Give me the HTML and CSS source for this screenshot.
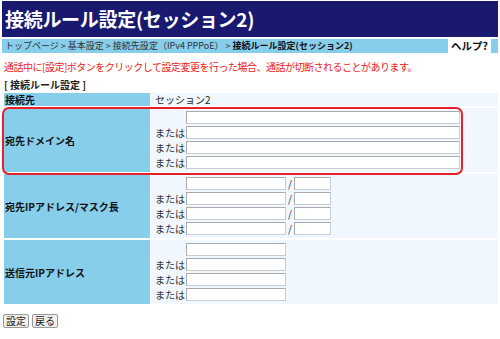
FILE: index.html
```html
<!DOCTYPE html>
<html lang="ja">
<head>
<meta charset="utf-8">
<title>接続ルール設定(セッション2)</title>
<link rel="stylesheet" href="styles.css">
</head>
<body>
<div class="title">接続ルール設定(セッション2)</div>
<div class="crumbs">
  <div class="path">トップページ &gt; 基本設定 &gt; 接続先設定（IPv4 PPPoE） &gt; <b>接続ルール設定(セッション2)</b></div>
  <div class="help">ヘルプ?</div>
</div>
<p class="notice">通話中に[設定]ボタンをクリックして設定変更を行った場合、通話が切断されることがあります。</p>
<p class="section">[ 接続ルール設定 ]</p>
<div class="form-wrap">
  <div class="form">
    <div class="label short">接続先</div>
    <div class="value short">セッション2</div>

    <div class="label">宛先ドメイン名</div>
    <div class="value">
      <div class="line"><span class="or"></span><input class="wide" type="text"></div>
      <div class="line"><span class="or">または</span><input class="wide" type="text"></div>
      <div class="line"><span class="or">または</span><input class="wide" type="text"></div>
      <div class="line"><span class="or">または</span><input class="wide" type="text"></div>
    </div>

    <div class="label">宛先IPアドレス/マスク長</div>
    <div class="value">
      <div class="line"><span class="or"></span><input class="ip" type="text"><span class="slash">/</span><input class="mask" type="text"></div>
      <div class="line"><span class="or">または</span><input class="ip" type="text"><span class="slash">/</span><input class="mask" type="text"></div>
      <div class="line"><span class="or">または</span><input class="ip" type="text"><span class="slash">/</span><input class="mask" type="text"></div>
      <div class="line"><span class="or">または</span><input class="ip" type="text"><span class="slash">/</span><input class="mask" type="text"></div>
    </div>

    <div class="label">送信元IPアドレス</div>
    <div class="value">
      <div class="line"><span class="or"></span><input class="ip" type="text"></div>
      <div class="line"><span class="or">または</span><input class="ip" type="text"></div>
      <div class="line"><span class="or">または</span><input class="ip" type="text"></div>
      <div class="line"><span class="or">または</span><input class="ip" type="text"></div>
    </div>
  </div>
  <div class="highlight"></div>
</div>
<div class="buttons">
  <button type="button">設定</button>
  <button type="button">戻る</button>
</div>
</body>
</html>
```

FILE: styles.css
```css
html, body {
  margin: 0;
  padding: 0;
  background: #fff;
}
body {
  padding: 1px 2px 0 2px;
  font-family: "Noto Sans CJK JP", "Noto Sans", sans-serif;
  font-size: 10px;
  color: #222;
}
.title {
  background: #191970;
  color: #fff;
  font-weight: bold;
  font-size: 19px;
  height: 36px;
  line-height: 36px;
  padding-left: 3px;
  white-space: nowrap;
  overflow: hidden;
  letter-spacing: -0.3px;
}
.crumbs {
  display: flex;
  margin-top: 2px;
  height: 14px;
  background: #87ceeb;
  padding-right: 7px;
}
.path {
  flex: 1;
  font-size: 9px;
  line-height: 14px;
  padding-left: 3px;
  color: #333;
  white-space: nowrap;
}
.path b { color: #111; }
.help {
  width: 43px;
  background: #fff;
  font-weight: bold;
  font-size: 10.5px;
  line-height: 14px;
  text-align: center;
  color: #111;
}
.notice {
  margin: 7px 0 0 2px;
  color: #f02020;
  line-height: 14px;
  white-space: nowrap;
  letter-spacing: -0.5px;
}
.section {
  margin: 5px 0 0 2px;
  font-weight: bold;
  line-height: 12px;
  height: 12px;
}
.form-wrap {
  position: relative;
  margin: 2px 0 0 2px;
}
.form {
  display: grid;
  grid-template-columns: 146px 1fr;
  gap: 2px 1px;
}
.label {
  background: #87ceeb;
  font-weight: bold;
  display: flex;
  align-items: center;
  padding-left: 1px;
  color: #111;
}
.value {
  background: #f0f7ff;
  display: flex;
  flex-direction: column;
  gap: 2px;
  padding: 3px 0 3px 4px;
}
.short {
  padding-top: 0;
  padding-bottom: 0;
  height: 13px;
  line-height: 13px;
}
.value.short { display: block; padding-left: 4px; }
.line {
  display: flex;
  align-items: center;
  height: 13px;
}
.or {
  width: 31px;
  color: #333;
}
input {
  box-sizing: border-box;
  height: 13px;
  margin: 0;
  padding: 0;
  border: 1px solid #aaa;
  border-right-color: #ccc;
  border-bottom-color: #ccc;
  background: #fff;
  font-size: 10px;
}
.wide { width: 274px; }
.ip { width: 100px; }
.mask { width: 37px; }
.slash {
  width: 8px;
  text-align: center;
  color: #333;
}
.highlight {
  position: absolute;
  left: -2px;
  top: 14px;
  width: 461px;
  height: 68px;
  box-sizing: border-box;
  border: 2px solid #e8202a;
  border-radius: 7px;
  pointer-events: none;
}
.buttons {
  display: flex;
  gap: 3px;
  margin: 10px 0 0 1px;
}
button {
  font-family: inherit;
  font-size: 10px;
  height: 14px;
  line-height: 12px;
  padding: 0 2px;
  border: 1px solid #999;
  background: #f0f0f0;
  color: #222;
  border-radius: 2px;
}
```
